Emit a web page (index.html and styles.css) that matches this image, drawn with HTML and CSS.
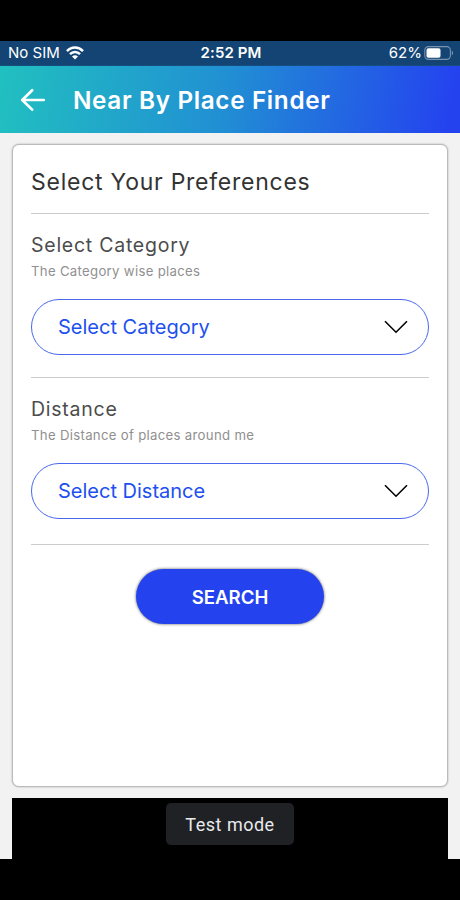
FILE: index.html
```html
<!DOCTYPE html>
<html lang="en">
<head>
<meta charset="utf-8">
<title>Near By Place Finder</title>
<link rel="stylesheet" href="styles.css">
</head>
<body>
<div class="status">
  <div class="carrier"><span class="sim">No SIM</span>
    <svg width="18" height="14" viewBox="0 0 18 14" fill="none" stroke="#fff" stroke-width="2.5"><path d="M1 5.1C5.5.3 12.5.3 17 5.1M4 8.2c2.8-2.9 7.2-2.9 10 0"/><path d="M6 10.4c1.8-1.6 4.2-1.6 6 0L9 13.5z" fill="#fff" stroke="none"/></svg>
  </div>
  <span class="time">2:52 PM</span>
  <div class="power"><span class="percent">62%</span>
    <svg width="30" height="14" viewBox="0 0 30 14"><rect x=".8" y=".6" width="25.6" height="12.8" rx="3.6" fill="none" stroke="#7893b0" stroke-width="1.1"/><rect x="2.5" y="2.3" width="14" height="9.4" rx="1.8" fill="#fff"/><path d="M27.8 4.7c1.8.8 1.8 3.8 0 4.6z" fill="#7893b0"/></svg>
  </div>
</div>
<header class="appbar">
  <svg class="back" width="26" height="24" viewBox="0 0 26 24" fill="none" stroke="#fff" stroke-width="2.7" stroke-linecap="round" stroke-linejoin="round"><path d="M12.2 2.2 2.2 12l10 9.6M2.4 12h21.4"/></svg>
  <h1>Near By Place Finder</h1>
</header>
<main>
  <section class="card">
    <h2>Select Your Preferences</h2>
    <div class="group category">
      <h3>Select Category</h3>
      <p>The Category wise places</p>
      <div class="select"><span>Select Category</span><svg width="24" height="14" viewBox="0 0 24 14" fill="none" stroke="#000" stroke-width="1.6"><path d="M1 1.3 12 12.2 23 1.3"/></svg></div>
    </div>
    <div class="group distance">
      <h3>Distance</h3>
      <p>The Distance of places around me</p>
      <div class="select"><span>Select Distance</span><svg width="24" height="14" viewBox="0 0 24 14" fill="none" stroke="#000" stroke-width="1.6"><path d="M1 1.3 12 12.2 23 1.3"/></svg></div>
    </div>
    <button class="search"><span>SEARCH</span></button>
  </section>
  <div class="ad"><div class="badge"><span>Test mode</span></div></div>
</main>
</body>
</html>
```
FILE: styles.css
```css
* { box-sizing: border-box; }
body { margin: 0; height: 900px; padding-top: 41px; background: #000; font-family: Inter, sans-serif; overflow: hidden; }
h1, h2, h3, p { margin: 0; font-weight: 400; white-space: nowrap; }
svg { display: block; flex: none; }
.status { height: 25px; background: #134473; color: #fff; display: grid; grid-template-columns: 1fr auto 1fr; align-items: center; padding: 0 6px 0 8px; font-size: 15px; line-height: 24px; border-bottom: 1px solid #174e80; }
.carrier, .power { display: flex; align-items: center; }
.carrier { gap: 6px; }
.power { justify-content: flex-end; gap: 2px; }
.time { font-weight: 600; letter-spacing: .1px; }
.appbar { height: 67px; display: flex; align-items: center; padding-left: 20px; background: linear-gradient(100deg, #21c0c0 0%, #2190d3 48%, #2443ef 97%); color: #fff; }
.back { margin-top: 1px; }
h1 { margin: 1px 0 0 27px; font-size: 24.3px; font-weight: 600; line-height: 30px; letter-spacing: .65px; }
main { height: 726px; padding: 11px 12px 0; background: #f2f2f2; }
.card { height: 643px; padding: 0 18px; background: #fff; border: 1px solid #bbb; border-radius: 7px; box-shadow: 0 0 2px #aaa; }
h2 { height: 69px; padding-top: 22px; color: #333; font-size: 23px; line-height: 31px; letter-spacing: .75px; border-bottom: 1px solid #ccc; }
.group { border-bottom: 1px solid #ccc; padding-top: 18px; }
.category { height: 164px; }
.distance { height: 167px; }
h3 { font-size: 19.5px; line-height: 26px; letter-spacing: .75px; color: #4c4c4c; }
p { margin-top: 4px; font-size: 13.2px; line-height: 18px; letter-spacing: .3px; color: #909090; }
.select { margin-top: 19px; height: 56px; border: 1.5px solid #4968ec; border-radius: 28px; display: flex; align-items: center; justify-content: space-between; padding: 0 20px 0 26px; color: #1c50ef; font-size: 20px; white-space: nowrap; }
.search { display: block; width: 188px; height: 55px; margin: 24px auto 0; border: 0; border-radius: 28px; background: #2443ef; color: #fff; font: 600 18.6px Inter, sans-serif; box-shadow: 0 0 3px #555; padding: 0; }
.ad { margin-top: 11px; height: 61px; background: #000; padding-top: 5px; }
.badge { width: 128px; height: 42px; margin: 0 auto; border-radius: 5px; background: #202124; color: #e8eaed; display: flex; align-items: center; justify-content: center; font: 18px Roboto, sans-serif; letter-spacing: .5px; }
```
